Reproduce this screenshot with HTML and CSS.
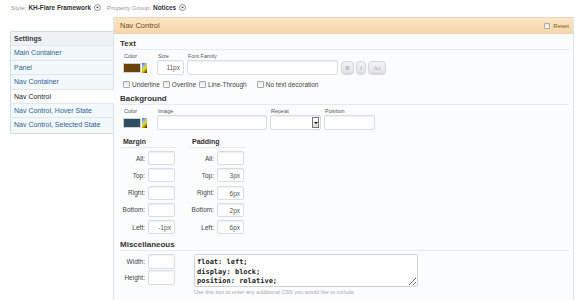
FILE: index.html
```html
<!DOCTYPE html>
<html lang="en">
<head>
    <meta charset="UTF-8">
    <title>Style Properties - Nav Control</title>
    <link rel="stylesheet" href="styles.css">
</head>
<body>
    <div class="topbar">
        <span class="muted">Style:</span><b>KH-Flare Framework</b>
        <svg class="dd" width="7" height="7" viewBox="0 0 7 7"><circle cx="3.5" cy="3.5" r="3" fill="#fff" stroke="#777" stroke-width="0.8"/><path d="M2 2.8h3L3.5 4.6z" fill="#444"/></svg>
        <span class="muted group">Property Group:</span><b>Notices</b>
        <svg class="dd" width="7" height="7" viewBox="0 0 7 7"><circle cx="3.5" cy="3.5" r="3" fill="#fff" stroke="#777" stroke-width="0.8"/><path d="M2 2.8h3L3.5 4.6z" fill="#444"/></svg>
    </div>

    <div class="layout">
        <ul class="side">
            <li class="head">Settings</li>
            <li><a href="#">Main Container</a></li>
            <li><a href="#">Panel</a></li>
            <li><a href="#">Nav Container</a></li>
            <li class="on">Nav Control</li>
            <li><a href="#">Nav Control, Hover State</a></li>
            <li><a href="#">Nav Control, Selected State</a></li>
        </ul>

        <div class="panel">
            <div class="panel-head">
                <span>Nav Control</span>
                <label class="reset"><span class="cb"></span>Reset</label>
            </div>
            <div class="panel-body">
                <h3>Text</h3>
                <div class="fields">
                    <div class="field f-color">
                        <label>Color</label>
                        <div class="picker"><span class="swatch brown"></span><span class="wheel"></span></div>
                    </div>
                    <div class="field">
                        <label>Size</label>
                        <div class="input w-size num">11px</div>
                    </div>
                    <div class="field">
                        <label>Font Family</label>
                        <div class="input w-family"></div>
                    </div>
                    <div class="field">
                        <label>&nbsp;</label>
                        <div class="btns">
                            <span class="fbtn b">B</span>
                            <span class="fbtn i">I</span>
                            <span class="fbtn aa">Aa</span>
                        </div>
                    </div>
                </div>
                <div class="checks">
                    <label><span class="cb"></span>Underline</label>
                    <label><span class="cb"></span>Overline</label>
                    <label><span class="cb"></span>Line-Through</label>
                    <label class="wide"><span class="cb"></span>No text decoration</label>
                </div>

                <h3 class="sec">Background</h3>
                <div class="fields">
                    <div class="field f-color">
                        <label>Color</label>
                        <div class="picker"><span class="swatch slate"></span><span class="wheel"></span></div>
                    </div>
                    <div class="field">
                        <label>Image</label>
                        <div class="input w-image"></div>
                    </div>
                    <div class="field">
                        <label>Repeat</label>
                        <div class="input w-repeat select"><span class="arrow"></span></div>
                    </div>
                    <div class="field">
                        <label>Position</label>
                        <div class="input w-pos"></div>
                    </div>
                </div>

                <div class="boxes">
                    <div class="box-col">
                        <h4>Margin</h4>
                        <div class="row"><span>All:</span><div class="input small"></div></div>
                        <div class="row"><span>Top:</span><div class="input small"></div></div>
                        <div class="row"><span>Right:</span><div class="input small"></div></div>
                        <div class="row"><span>Bottom:</span><div class="input small"></div></div>
                        <div class="row"><span>Left:</span><div class="input small num">-1px</div></div>
                    </div>
                    <div class="box-col">
                        <h4>Padding</h4>
                        <div class="row"><span>All:</span><div class="input small"></div></div>
                        <div class="row"><span>Top:</span><div class="input small num">3px</div></div>
                        <div class="row"><span>Right:</span><div class="input small num">6px</div></div>
                        <div class="row"><span>Bottom:</span><div class="input small num">2px</div></div>
                        <div class="row"><span>Left:</span><div class="input small num">6px</div></div>
                    </div>
                </div>

                <h3 class="sec misc-head">Miscellaneous</h3>
                <div class="misc">
                    <div class="misc-left">
                        <div class="row"><span>Width:</span><div class="input small"></div></div>
                        <div class="row"><span>Height:</span><div class="input small"></div></div>
                    </div>
                    <div class="misc-right">
                        <textarea class="css">float: left;
display: block;
position: relative;</textarea>
                        <p class="hint">Use this box to enter any additional CSS you would like to include.</p>
                    </div>
                </div>
            </div>
        </div>
    </div>
</body>
</html>
```

FILE: styles.css
```css
* {
    box-sizing: border-box;
}
body {
    margin: 0;
    background: #fff;
    color: #333;
    font-family: "Liberation Sans", Arial, sans-serif;
    font-size: 7px;
}

/* top bar */
.topbar {
    height: 14px;
    padding-left: 11px;
    display: flex;
    align-items: center;
    white-space: nowrap;
}
.topbar b {
    margin-left: 2px;
    font-size: 6.4px;
    color: #333;
}
.muted {
    font-size: 6.2px;
    color: #999;
}
.dd {
    margin-left: 3px;
}
.group {
    margin-left: 6px;
}

.layout {
    display: flex;
    align-items: flex-start;
    margin-top: 3px;
    padding-left: 10px;
}

/* sidebar */
.side {
    list-style: none;
    margin: 14px 0 0;
    padding: 0;
    width: 103px;
    border: 1px solid #cfdde7;
    border-right: none;
}
.side li {
    height: 14.4px;
    line-height: 13.4px;
    padding-left: 3px;
    background: #f3f8fb;
    border-bottom: 1px solid #dce8ef;
    white-space: nowrap;
}
.side li:last-child {
    border-bottom: none;
}
.side a {
    color: #2c6394;
    text-decoration: none;
}
.side .head {
    background: #eef2f4;
    font-weight: bold;
    color: #3a3a3a;
}
.side .on {
    position: relative;
    z-index: 1;
    margin-right: -1px;
    background: #fff;
    color: #222;
}

/* main panel */
.panel {
    flex: none;
    width: 461px;
    border: 1px solid #d9e4eb;
    border-top-color: #ecd6b4;
    background: #fbfcfd;
}
.panel-head {
    height: 16px;
    display: flex;
    align-items: center;
    justify-content: space-between;
    padding: 0 4px 0 6px;
    background: linear-gradient(#fbe6c8, #f6d7a9);
    border-bottom: 1px solid #ecd3ae;
    color: #6b4a1f;
    font-size: 7.5px;
}
.reset {
    display: flex;
    align-items: center;
    gap: 1px;
    font-size: 6px;
    color: #7a5a30;
}
.reset .cb {
    width: 6px;
    height: 6px;
}
.panel-body {
    padding: 5px 4px 20px 6px;
}
h3 {
    margin: 0;
    font-size: 8px;
    line-height: 10px;
    color: #333;
    border-bottom: 1px solid #e3ebf0;
}
h3.sec {
    margin-top: 5px;
}

/* field rows */
.fields {
    display: flex;
    align-items: flex-end;
    gap: 3px;
    margin-top: 3px;
    padding-left: 3px;
}
.field {
    display: flex;
    flex-direction: column;
}
.field label {
    height: 7px;
    line-height: 7px;
    padding-left: 1px;
    font-size: 5.5px;
    color: #555;
}
.f-color {
    width: 31px;
}
.picker {
    height: 15px;
    display: flex;
    align-items: center;
}
.swatch {
    width: 18px;
    height: 10px;
    border: 1px solid #d0d0d0;
}
.brown {
    background: #6b4207;
}
.slate {
    background: #2d4d63;
}
.wheel {
    width: 5px;
    height: 10px;
    margin-left: 1px;
    background: linear-gradient(135deg, #2e6fd6 0%, #8db8ef 28%, #f2dc00 55%, #b08a00 75%, #111 100%);
}
.input {
    height: 15px;
    background: #fff;
    border: 1px solid #d6dde3;
    border-radius: 2px;
    box-shadow: inset 0 1px 1px #eef1f4;
    font-size: 6.5px;
    line-height: 13px;
    color: #555;
}
.num {
    text-align: right;
    padding-right: 3px;
}
.w-size {
    width: 27px;
}
.w-family {
    width: 151px;
}
.w-image {
    width: 110px;
}
.w-repeat {
    width: 51px;
}
.w-pos {
    width: 51px;
}
.select {
    display: flex;
    justify-content: flex-end;
    align-items: center;
    padding-right: 1px;
}
.arrow {
    width: 7px;
    height: 11px;
    border: 1px solid #777;
    background: linear-gradient(#fafafa, #dcdcdc);
    display: flex;
    align-items: center;
    justify-content: center;
}
.arrow::after {
    content: "";
    border-left: 2px solid transparent;
    border-right: 2px solid transparent;
    border-top: 2px solid #111;
}
.btns {
    height: 15px;
    display: flex;
    align-items: center;
    gap: 2px;
}
.fbtn {
    height: 13px;
    line-height: 13px;
    text-align: center;
    border: 1px solid #d4d4dc;
    border-radius: 4px;
    background: linear-gradient(#f4f4f7, #e2e2e8);
    box-shadow: 0 1px 1px #d8d8de;
    font-family: "Liberation Serif", serif;
    font-size: 6px;
    color: #a9a9b8;
}
.fbtn.b {
    width: 13px;
    font-weight: bold;
}
.fbtn.i {
    width: 10px;
    font-style: italic;
}
.fbtn.aa {
    width: 18px;
}

/* checkboxes */
.checks {
    display: flex;
    gap: 3px;
    margin-top: 5px;
    padding-left: 3px;
    height: 9px;
    align-items: center;
    font-size: 6.5px;
    color: #444;
}
.checks label {
    display: flex;
    align-items: center;
}
.checks .wide {
    margin-left: 7px;
}
.cb {
    width: 7px;
    height: 7px;
    margin-right: 2px;
    border: 1px solid #a9a9a9;
    border-radius: 1px;
    background: linear-gradient(#e6e6e6, #fff);
}

/* margin / padding */
.boxes {
    display: flex;
    gap: 13px;
    margin-top: 7px;
}
.box-col {
    width: 56px;
}
h4 {
    margin: 0 0 3px;
    padding-left: 3px;
    font-size: 7px;
    line-height: 10px;
    color: #333;
    border-bottom: 1px solid #e3ebf0;
}
.row {
    display: flex;
    align-items: center;
    gap: 3px;
    margin-bottom: 3.3px;
}
.row span {
    width: 25px;
    text-align: right;
    font-size: 6.5px;
    color: #444;
}
.input.small {
    width: 27px;
    height: 14px;
}

/* miscellaneous */
h3.misc-head {
    margin-top: 3px;
}
.misc {
    display: flex;
    margin-top: 3px;
}
.misc-left {
    width: 55px;
}
.misc-left .row {
    margin-bottom: 1px;
}
.misc-left .input.small {
    height: 15px;
}
.misc-right {
    margin-left: 19px;
}
.css {
    display: block;
    width: 224px;
    height: 33px;
    margin: 0;
    padding: 3px 2px 0;
    border: 1px solid #cdd5dc;
    border-radius: 2px;
    background: #fff;
    font-family: "DejaVu Sans Mono", monospace;
    font-size: 7px;
    line-height: 9.5px;
    font-weight: bold;
    color: #1a1a1a;
    overflow: hidden;
}
.hint {
    margin: 2px 0 0;
    font-size: 5.5px;
    line-height: 7px;
    color: #aaa;
}
```
